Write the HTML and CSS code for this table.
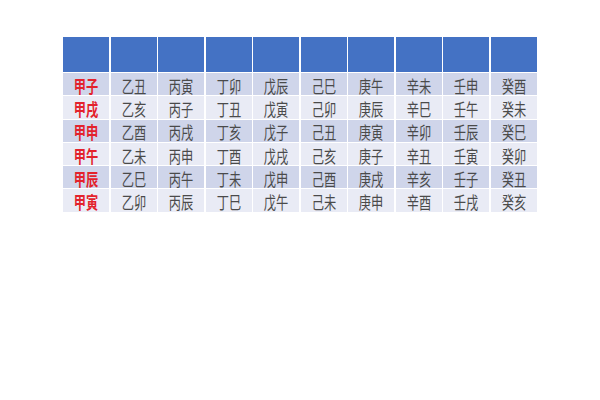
FILE: index.html
```html
<!DOCTYPE html>
<html lang="zh">
<head>
<meta charset="utf-8">
<link rel="stylesheet" href="styles.css">
</head>
<body>
<div class="table">
  <div class="h"></div><div class="h"></div><div class="h"></div><div class="h"></div><div class="h"></div><div class="h"></div><div class="h"></div><div class="h"></div><div class="h"></div><div class="h"></div>

  <div class="c o k"><span>甲子</span></div><div class="c o"><span>乙丑</span></div><div class="c o"><span>丙寅</span></div><div class="c o"><span>丁卯</span></div><div class="c o"><span>戊辰</span></div><div class="c o"><span>己巳</span></div><div class="c o"><span>庚午</span></div><div class="c o"><span>辛未</span></div><div class="c o"><span>壬申</span></div><div class="c o"><span>癸酉</span></div>

  <div class="c e k"><span>甲戌</span></div><div class="c e"><span>乙亥</span></div><div class="c e"><span>丙子</span></div><div class="c e"><span>丁丑</span></div><div class="c e"><span>戊寅</span></div><div class="c e"><span>己卯</span></div><div class="c e"><span>庚辰</span></div><div class="c e"><span>辛巳</span></div><div class="c e"><span>壬午</span></div><div class="c e"><span>癸未</span></div>

  <div class="c o k"><span>甲申</span></div><div class="c o"><span>乙酉</span></div><div class="c o"><span>丙戌</span></div><div class="c o"><span>丁亥</span></div><div class="c o"><span>戊子</span></div><div class="c o"><span>己丑</span></div><div class="c o"><span>庚寅</span></div><div class="c o"><span>辛卯</span></div><div class="c o"><span>壬辰</span></div><div class="c o"><span>癸巳</span></div>

  <div class="c e k"><span>甲午</span></div><div class="c e"><span>乙未</span></div><div class="c e"><span>丙申</span></div><div class="c e"><span>丁酉</span></div><div class="c e"><span>戊戌</span></div><div class="c e"><span>己亥</span></div><div class="c e"><span>庚子</span></div><div class="c e"><span>辛丑</span></div><div class="c e"><span>壬寅</span></div><div class="c e"><span>癸卯</span></div>

  <div class="c o k"><span>甲辰</span></div><div class="c o"><span>乙巳</span></div><div class="c o"><span>丙午</span></div><div class="c o"><span>丁未</span></div><div class="c o"><span>戊申</span></div><div class="c o"><span>己酉</span></div><div class="c o"><span>庚戌</span></div><div class="c o"><span>辛亥</span></div><div class="c o"><span>壬子</span></div><div class="c o"><span>癸丑</span></div>

  <div class="c e k"><span>甲寅</span></div><div class="c e"><span>乙卯</span></div><div class="c e"><span>丙辰</span></div><div class="c e"><span>丁巳</span></div><div class="c e"><span>戊午</span></div><div class="c e"><span>己未</span></div><div class="c e"><span>庚申</span></div><div class="c e"><span>辛酉</span></div><div class="c e"><span>壬戌</span></div><div class="c e"><span>癸亥</span></div>
</div>
</body>
</html>
```

FILE: styles.css
```css
html, body {
  margin: 0;
  padding: 0;
  background: #ffffff;
}
body {
  width: 600px;
  height: 400px;
  padding: 37px 0 0 63px;
  box-sizing: border-box;
  font-family: "Noto Sans CJK SC", "Noto Sans", sans-serif;
}
.table {
  width: 474px;
  display: grid;
  grid-template-columns: repeat(10, 1fr);
  grid-template-rows: 35px repeat(6, 22.3px);
  gap: 1px 1.5px;
  background: #ffffff;
}
.h {
  background: #4472c4;
}
.c {
  display: flex;
  align-items: center;
  justify-content: center;
  font-size: 17px;
  line-height: 1;
  color: #4a4a4a;
  padding-top: 2px;
  box-sizing: border-box;
}
.c span {
  display: inline-block;
  transform: scaleX(0.72);
  white-space: nowrap;
}
.o {
  background: #cfd5ea;
}
.e {
  background: #e9ebf5;
}
.k {
  color: #e3222c;
  font-weight: 700;
}
```
